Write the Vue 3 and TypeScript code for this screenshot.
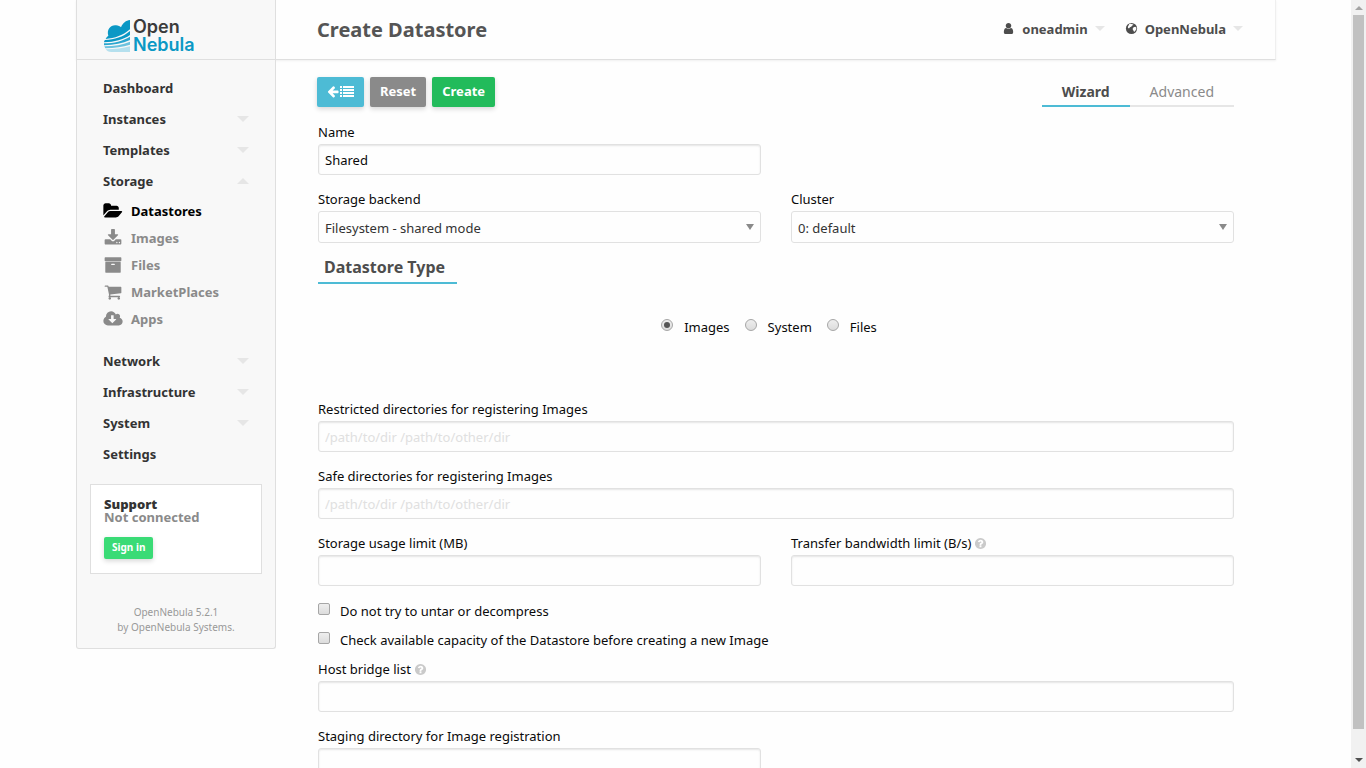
<script setup lang="ts">
import { ref } from 'vue'

interface Icon { box: string; d: string }
interface SubItem { label: string; icon: string; active?: boolean }
interface MenuItem { label: string; arrow?: 'down' | 'up'; children?: SubItem[] }

const icons: Record<string, Icon> = {
  folder: { box: '0 0 1920 1792', d: 'M1879 952q0 31-31 66l-336 396q-43 51-120.5 86.5t-143.5 35.5h-1088q-34 0-60.5-13t-26.5-43q0-31 31-66l336-396q43-51 120.5-86.5t143.5-35.5h1088q34 0 60.5 13t26.5 43zm-343-344v160h-832q-94 0-197 47.5t-164 119.5l-337 396-5 6q0-4-.5-12.5t-.5-12.5v-960q0-92 66-158t158-66h320q92 0 158 66t66 158v32h544q92 0 158 66t66 158z' },
  download: { box: '-64 0 1920 1792', d: 'M1344 1344q0-26-19-45t-45-19-45 19-19 45 19 45 45 19 45-19 19-45zm256 0q0-26-19-45t-45-19-45 19-19 45 19 45 45 19 45-19 19-45zm128-224v320q0 40-28 68t-68 28h-1472q-40 0-68-28t-28-68v-320q0-40 28-68t68-28h465l135 136q58 56 136 56t136-56l136-136h464q40 0 68 28t28 68zm-325-569q17 41-14 70l-448 448q-18 19-45 19t-45-19l-448-448q-31-29-14-70 17-39 59-39h256v-448q0-26 19-45t45-19h256q26 0 45 19t19 45v448h256q42 0 59 39z' },
  archive: { box: '-64 0 1920 1792', d: 'M1088 832q0-26-19-45t-45-19h-256q-26 0-45 19t-19 45 19 45 45 19h256q26 0 45-19t19-45zm576-192v960q0 26-19 45t-45 19h-1408q-26 0-45-19t-19-45v-960q0-26 19-45t45-19h1408q26 0 45 19t19 45zm64-448v256q0 26-19 45t-45 19h-1536q-26 0-45-19t-19-45v-256q0-26 19-45t45-19h1536q26 0 45 19t19 45z' },
  cart: { box: '-64 0 1920 1792', d: 'M704 1536q0 52-38 90t-90 38-90-38-38-90 38-90 90-38 90 38 38 90zm896 0q0 52-38 90t-90 38-90-38-38-90 38-90 90-38 90 38 38 90zm128-1088v512q0 24-16.5 42.5t-40.5 21.5l-1044 122q13 60 13 70 0 16-24 64h920q26 0 45 19t19 45-19 45-45 19h-1024q-26 0-45-19t-19-45q0-11 8-31.5t16-36 21.5-40 15.5-29.5l-177-823h-204q-26 0-45-19t-19-45 19-45 45-19h256q16 0 28.5 6.5t19.5 15.5 13 24.5 8 26 5.5 29.5 4.5 26h1201q26 0 45 19t19 45z' },
  cloud: { box: '-64 0 1920 1792', d: 'M1216 928q0-14-9-23t-23-9h-224v-352q0-13-9.5-22.5t-22.5-9.5h-192q-13 0-22.5 9.5t-9.5 22.5v352h-224q-13 0-22.5 9.5t-9.5 22.5q0 14 9 23l352 352q9 9 23 9t23-9l351-351q10-12 10-24zm640 224q0 159-112.5 271.5t-271.5 112.5h-1088q-185 0-316.5-131.5t-131.5-316.5q0-130 70-240t188-165q-2-30-2-43 0-212 150-362t362-150q156 0 285.5 87t188.5 231q71-62 166-62 106 0 181 75t75 181q0 76-41 138 130 31 213.5 135.5t83.5 238.5z' },
  question: { box: '0 0 1792 1792', d: 'M1024 1376v-192q0-14-9-23t-23-9h-192q-14 0-23 9t-9 23v192q0 14 9 23t23 9h192q14 0 23-9t9-23zm256-672q0-88-55.5-163t-138.5-116-170-41q-243 0-371 213-15 24 8 42l132 100q7 6 19 6 16 0 25-12 53-68 86-92 34-24 86-24 48 0 85.5 26t37.5 59q0 38-20 61t-68 45q-63 28-115.5 86.5t-52.5 125.5v36q0 14 9 23t23 9h192q14 0 23-9t9-23q0-19 21.5-49.5t54.5-49.5q32-18 49-28.5t46-35 44.5-48 28-60.5 12.5-81zm384 192q0 209-103 385.5t-279.5 279.5-385.5 103-385.5-103-279.5-279.5-103-385.5 103-385.5 279.5-279.5 385.5-103 385.5 103 279.5 279.5 103 385.5z' },
}

const menu: MenuItem[] = [
  { label: 'Dashboard' },
  { label: 'Instances', arrow: 'down' },
  { label: 'Templates', arrow: 'down' },
  {
    label: 'Storage',
    arrow: 'up',
    children: [
      { label: 'Datastores', icon: 'folder', active: true },
      { label: 'Images', icon: 'download' },
      { label: 'Files', icon: 'archive' },
      { label: 'MarketPlaces', icon: 'cart' },
      { label: 'Apps', icon: 'cloud' },
    ],
  },
  { label: 'Network', arrow: 'down' },
  { label: 'Infrastructure', arrow: 'down' },
  { label: 'System', arrow: 'down' },
  { label: 'Settings' },
]

const types = ['Images', 'System', 'Files']
const name = ref('Shared')
const backend = ref('Filesystem - shared mode')
const cluster = ref('0: default')
const type = ref('Images')
const restricted = ref('')
const safe = ref('')
const usageLimit = ref('')
const bandwidth = ref('')
const noDecompress = ref(false)
const checkCapacity = ref(false)
const bridges = ref('')
const staging = ref('')
</script>

<template>
  <div class="screen">
    <div class="viewport">
      <div class="page">
        <header class="topbar">
          <a class="logo" href="#">
            <svg class="logo-mark" viewBox="0 0 78 96" aria-hidden="true">
              <path fill="#0b98c5" d="M78 0v28C58 46 32 55 5 57c2-5 4-7 8-10C7 28 21 14 36 16c7 0 12 3 15 6C56 9 66 1 78 0z" />
              <path fill="#0b98c5" d="M78 33v12C58 59 32 66 0 67c0-3 1-5 3-7 29-1 54-9 75-27z" />
              <path fill="#2ba6cf" d="M78 50v10C56 70 30 75 0 76v-6c31 0 56-7 78-20z" />
              <path fill="#6cc2de" d="M78 65v9C56 81 32 84 4 85l-3-6c30 0 54-5 77-14z" />
              <path fill="#b5e0ee" d="M78 79v17H22c-8 0-14-3-17-8 28 0 52-3 73-9z" />
            </svg>
            <span class="logo-text"><span>Open</span><span class="logo-blue">Nebula</span></span>
          </a>
          <div class="heading">
            <h1>Create Datastore</h1>
            <div class="account">
              <button type="button" class="account-btn">
                <svg class="account-icon" viewBox="0 0 1792 1792" aria-hidden="true"><path d="M1536 1399q0 109-62.5 187t-150.5 78h-854q-88 0-150.5-78t-62.5-187q0-85 8.5-160.5t31.5-152 58.5-131 94-89 134.5-34.5q131 128 313 128t313-128q76 0 134.5 34.5t94 89 58.5 131 31.5 152 8.5 160.5zm-256-887q0 159-112.5 271.5t-271.5 112.5-271.5-112.5-112.5-271.5 112.5-271.5 271.5-112.5 271.5 112.5 112.5 271.5z" /></svg>
                <span>oneadmin</span>
                <i class="arrow"></i>
              </button>
              <button type="button" class="account-btn">
                <svg class="account-icon" viewBox="0 0 14 14" aria-hidden="true">
                  <circle cx="7" cy="7" r="6" />
                  <path class="sea" d="M4.6 2.2 6.2 1.9l2 .4 1 .9-1.5.7-1 1.3-1.4.5-.7 1.1-1.1-.2-.5-1.2.7-1.4zM9.3 5.6l1.6-.4 1.3.8v1.7l-1.1 1.7-1.3 1.3-.6-1.4-.9-1.2.1-1.5z" />
                </svg>
                <span>OpenNebula</span>
                <i class="arrow"></i>
              </button>
            </div>
          </div>
        </header>

        <div class="body">
          <aside class="sidebar">
            <nav>
              <ul class="menu">
                <li v-for="item in menu" :key="item.label">
                  <a class="menu-link" href="#">{{ item.label }}<i v-if="item.arrow" class="arrow" :class="item.arrow"></i></a>
                  <ul v-if="item.children" class="submenu">
                    <li v-for="sub in item.children" :key="sub.label">
                      <a class="sub-link" :class="{ active: sub.active }" href="#">
                        <svg class="sub-icon" :viewBox="icons[sub.icon].box" aria-hidden="true"><path :d="icons[sub.icon].d" /></svg>
                        {{ sub.label }}
                      </a>
                    </li>
                  </ul>
                </li>
              </ul>
            </nav>
            <section class="support">
              <strong>Support</strong>
              <span>Not connected</span>
              <button type="button">Sign in</button>
            </section>
            <footer class="version">
              <a href="#">OpenNebula 5.2.1</a>
              <span>by <a href="#">OpenNebula Systems</a>.</span>
            </footer>
          </aside>

          <main class="content">
            <div class="toolbar">
              <div class="actions">
                <button type="button" class="btn back" aria-label="Back to list">
                  <svg class="back-arrow" viewBox="64 0 1664 1792" aria-hidden="true"><path d="M1664 896v128q0 53-32.5 90.5t-84.5 37.5h-704l293 294q38 36 38 90t-38 90l-75 76q-37 37-90 37-52 0-91-37l-651-652q-37-37-37-90 0-52 37-91l651-650q38-38 91-38 52 0 90 38l75 74q38 38 38 91t-38 91l-293 293h704q52 0 84.5 37.5t32.5 90.5z" /></svg>
                  <svg class="back-list" viewBox="0 0 14 12" aria-hidden="true"><path d="M0 1h2v2H0zM3 1h11v2H3zM0 4h2v2H0zM3 4h11v2H3zM0 7h2v2H0zM3 7h11v2H3zM0 10h2v2H0zM3 10h11v2H3z" /></svg>
                </button>
                <button type="reset" class="btn reset">Reset</button>
                <button type="submit" class="btn create">Create</button>
              </div>
              <div class="tabs">
                <a class="tab active" href="#">Wizard</a>
                <a class="tab" href="#">Advanced</a>
              </div>
            </div>

            <form class="form" @submit.prevent>
              <div class="columns">
                <div class="field">
                  <label for="name">Name</label>
                  <input id="name" v-model="name" type="text" />
                </div>
              </div>
              <div class="columns">
                <div class="field">
                  <label for="backend">Storage backend</label>
                  <div class="select">
                    <select id="backend" v-model="backend"><option>Filesystem - shared mode</option></select>
                  </div>
                </div>
                <div class="field">
                  <label for="cluster">Cluster</label>
                  <div class="select">
                    <select id="cluster" v-model="cluster"><option>0: default</option></select>
                  </div>
                </div>
              </div>

              <h2>Datastore Type</h2>
              <div class="radios" role="radiogroup" aria-label="Datastore Type">
                <label v-for="t in types" :key="t"><input v-model="type" type="radio" name="type" :value="t" /><span>{{ t }}</span></label>
              </div>

              <div class="field">
                <label for="restricted">Restricted directories for registering Images</label>
                <input id="restricted" v-model="restricted" type="text" placeholder="/path/to/dir /path/to/other/dir" />
              </div>
              <div class="field">
                <label for="safe">Safe directories for registering Images</label>
                <input id="safe" v-model="safe" type="text" placeholder="/path/to/dir /path/to/other/dir" />
              </div>
              <div class="columns">
                <div class="field">
                  <label for="usage">Storage usage limit (MB)</label>
                  <input id="usage" v-model="usageLimit" type="text" />
                </div>
                <div class="field">
                  <label for="bandwidth">Transfer bandwidth limit (B/s)
                    <svg class="tip" :viewBox="icons.question.box" aria-hidden="true"><path :d="icons.question.d" /></svg>
                  </label>
                  <input id="bandwidth" v-model="bandwidth" type="text" />
                </div>
              </div>
              <label class="check"><input v-model="noDecompress" type="checkbox" /><span>Do not try to untar or decompress</span></label>
              <label class="check"><input v-model="checkCapacity" type="checkbox" /><span>Check available capacity of the Datastore before creating a new Image</span></label>
              <div class="field">
                <label for="bridges">Host bridge list
                  <svg class="tip" :viewBox="icons.question.box" aria-hidden="true"><path :d="icons.question.d" /></svg>
                </label>
                <input id="bridges" v-model="bridges" type="text" />
              </div>
              <div class="columns">
                <div class="field">
                  <label for="staging">Staging directory for Image registration</label>
                  <input id="staging" v-model="staging" type="text" />
                </div>
              </div>
            </form>
          </main>
        </div>
      </div>
    </div>
    <div class="scrollbar" aria-hidden="true">
      <i class="scroll-up"></i>
      <div class="scroll-track"><div class="scroll-thumb"></div></div>
      <i class="scroll-down"></i>
    </div>
  </div>
</template>

<style>
body { margin: 0; background: #fefefe; }
</style>

<style scoped>
* { box-sizing: border-box; }
.screen {
  display: flex;
  height: 100vh;
  overflow: hidden;
  font-family: "Noto Sans", sans-serif;
  font-size: 13px;
  color: #0a0a0a;
}
.viewport { flex: 1; padding-left: 1px; overflow-y: auto; scrollbar-width: none; }
.page { max-width: 1200px; margin: 0 auto; }
a { color: inherit; text-decoration: none; }
button, input, select { font: inherit; }
button { border: 0; cursor: pointer; }
ul { list-style: none; margin: 0; padding: 0; }

.topbar {
  display: flex;
  height: 60px;
  border-bottom: 1px solid #dfdfdf;
  border-right: 1px solid #efefef;
  box-shadow: 0 1px 2px rgba(0, 0, 0, .06);
}
.logo {
  display: flex;
  gap: 3px;
  width: 200px;
  padding: 20px 0 0 27px;
  background: #f8f8f8;
  border: solid #dfdfdf;
  border-width: 0 1px;
}
.logo-mark { width: 26px; height: 32px; }
.logo-text {
  display: flex;
  flex-direction: column;
  margin-top: -2px;
  font: 600 18px/18px Inter, sans-serif;
  color: #3b3b3b;
}
.logo-blue { color: #0b98c5; }
.heading {
  flex: 1;
  display: flex;
  justify-content: space-between;
  align-items: center;
  padding: 0 32px 0 41px;
}
h1 { margin: 0; font-size: 20px; line-height: 28px; color: #555; }
.account { display: flex; gap: 20px; margin-bottom: 2px; }
.account-btn {
  display: flex;
  align-items: center;
  gap: 7px;
  padding: 0;
  background: none;
  font-weight: 700;
  color: #4d4d4d;
}
.account-icon { width: 13px; height: 13px; fill: #4d4d4d; }
.sea { fill: #fefefe; }
.arrow {
  width: 0;
  height: 0;
  border: 5px solid transparent;
  border-bottom-width: 0;
  border-top-color: #e6e6e6;
}
.menu-link .arrow { border-width: 6px 6px 0; }
.menu-link .arrow.up {
  border-color: transparent transparent #e6e6e6;
  border-width: 0 6px 6px;
}

.body { display: flex; align-items: flex-start; }
.sidebar {
  width: 200px;
  flex: none;
  padding: 12px 13px 13px;
  background: #f8f8f8;
  border: 1px solid #dfdfdf;
  border-top: 0;
  border-radius: 0 0 3px 3px;
}
.menu-link {
  display: flex;
  align-items: center;
  justify-content: space-between;
  height: 31px;
  padding: 0 13px;
  font-weight: 700;
  color: #333;
}
.submenu { padding: 1px 0 13px 13px; }
.sub-link {
  display: flex;
  align-items: center;
  gap: 8px;
  height: 27px;
  font-weight: 700;
  color: #8a8a8a;
}
.sub-link.active { color: #000; }
.sub-icon { width: 20px; height: 18px; fill: currentColor; }
.support {
  display: flex;
  flex-direction: column;
  align-items: flex-start;
  margin-top: 15px;
  padding: 13px 13px 14px;
  background: #fff;
  border: 1px solid #dfdfdf;
  font-weight: 700;
  line-height: 13px;
  color: #8a8a8a;
}
.support strong { color: #333; }
.support button {
  height: 22px;
  margin-top: 13px;
  padding: 0 8px 2px;
  border-radius: 2px;
  background: #3adb76;
  box-shadow: 0 2px 5px rgba(0, 0, 0, .16);
  font-size: 10px;
  color: #fff;
}
.version {
  display: flex;
  flex-direction: column;
  align-items: center;
  margin-top: 31px;
  font-size: 10px;
  line-height: 15px;
  color: #999;
}

.content { flex: 1; min-width: 0; padding: 17px 42px 20px; }
.toolbar { display: flex; justify-content: space-between; align-items: flex-start; }
.actions { display: flex; gap: 6px; margin-left: -1px; }
.btn {
  display: flex;
  align-items: center;
  height: 30px;
  padding: 0 10px 2px;
  border-radius: 2px;
  box-shadow: 0 2px 5px rgba(0, 0, 0, .16);
  font-weight: 700;
  color: #fff;
}
.back { background: #4dbbd5; fill: #fff; gap: 1px; }
.back-arrow { width: 12px; height: 13px; }
.back-list { width: 14px; height: 12px; }
.reset { background: #8a8a8a; }
.create { background: #22bb5b; }
.tabs { display: flex; }
.tab {
  padding: 5px 20px 3px;
  border-bottom: 2px solid #e6e6e6;
  font-size: 14px;
  line-height: 20px;
  color: #8a8a8a;
}
.tab.active { border-color: #4dbbd5; font-weight: 700; color: #4d4d4d; }

.form { padding-top: 14px; }
.columns { display: grid; grid-template-columns: 1fr 1fr; column-gap: 30px; }
.field { margin-bottom: 13px; }
.field > label { display: flex; align-items: center; gap: 3px; height: 23px; padding-bottom: 2px; }
.tip { width: 13px; height: 13px; margin-top: 2px; fill: #cacaca; }
input[type="text"], select {
  display: block;
  width: 100%;
  height: 31px;
  padding: 0 6px;
  border: 1px solid #e1e1e1;
  border-radius: 3px;
  background: #fefefe;
  color: #0a0a0a;
  outline: 0;
}
input[type="text"] { box-shadow: inset 0 1px 2px rgba(10, 10, 10, .1); }
input::placeholder { color: #e0e0e0; opacity: 1; }
select { appearance: none; height: 32px; padding-top: 2px; color: #333; }
.select { display: grid; align-items: center; }
.select select { grid-area: 1 / 1; }
.select::after {
  content: "";
  grid-area: 1 / 1;
  justify-self: end;
  margin-right: 7px;
  border: solid transparent;
  border-width: 6px 4px 0;
  border-top-color: #8a8a8a;
  pointer-events: none;
}
h2 {
  width: fit-content;
  margin: 0;
  padding: 0 12px 3px 6px;
  border-bottom: 2px solid #4dbbd5;
  font-size: 16px;
  line-height: 23px;
  color: #4d4d4d;
}
.radios { display: flex; justify-content: center; gap: 15px; padding: 32px 14px 60px 0; }
.radios label { display: flex; gap: 11px; line-height: 22px; }
.check { display: flex; gap: 10px; height: 29px; line-height: 24px; }
input[type="radio"], input[type="checkbox"] {
  appearance: none;
  display: grid;
  place-items: center;
  width: 12px;
  height: 12px;
  margin: 3px 0 0;
  border: 1px solid #a6a6a6;
  background: linear-gradient(#eee, #dcdcdc);
}
input[type="radio"] { border-radius: 50%; }
input[type="checkbox"] { margin-top: 4px; border-radius: 2px; }
input[type="radio"]:checked::before {
  content: "";
  width: 6px;
  height: 6px;
  border-radius: 50%;
  background: #555;
}
input[type="checkbox"]:checked::before { content: "✓"; line-height: 10px; }
.check + .field { margin-top: 1px; }

.scrollbar {
  display: flex;
  flex-direction: column;
  align-items: center;
  justify-content: space-between;
  width: 15px;
  padding: 6px 0;
  background: #f1f1f1;
}
.scroll-track { flex: 1; align-self: stretch; margin: 5px 0; padding: 0 2px; }
.scroll-thumb { height: calc(100% - 24px); background: #c1c1c1; }
.scroll-up, .scroll-down { border: 4px solid transparent; }
.scroll-up { border-top: 0; border-bottom-color: #a3a3a3; }
.scroll-down { border-bottom: 0; border-top-color: #505050; }
</style>
